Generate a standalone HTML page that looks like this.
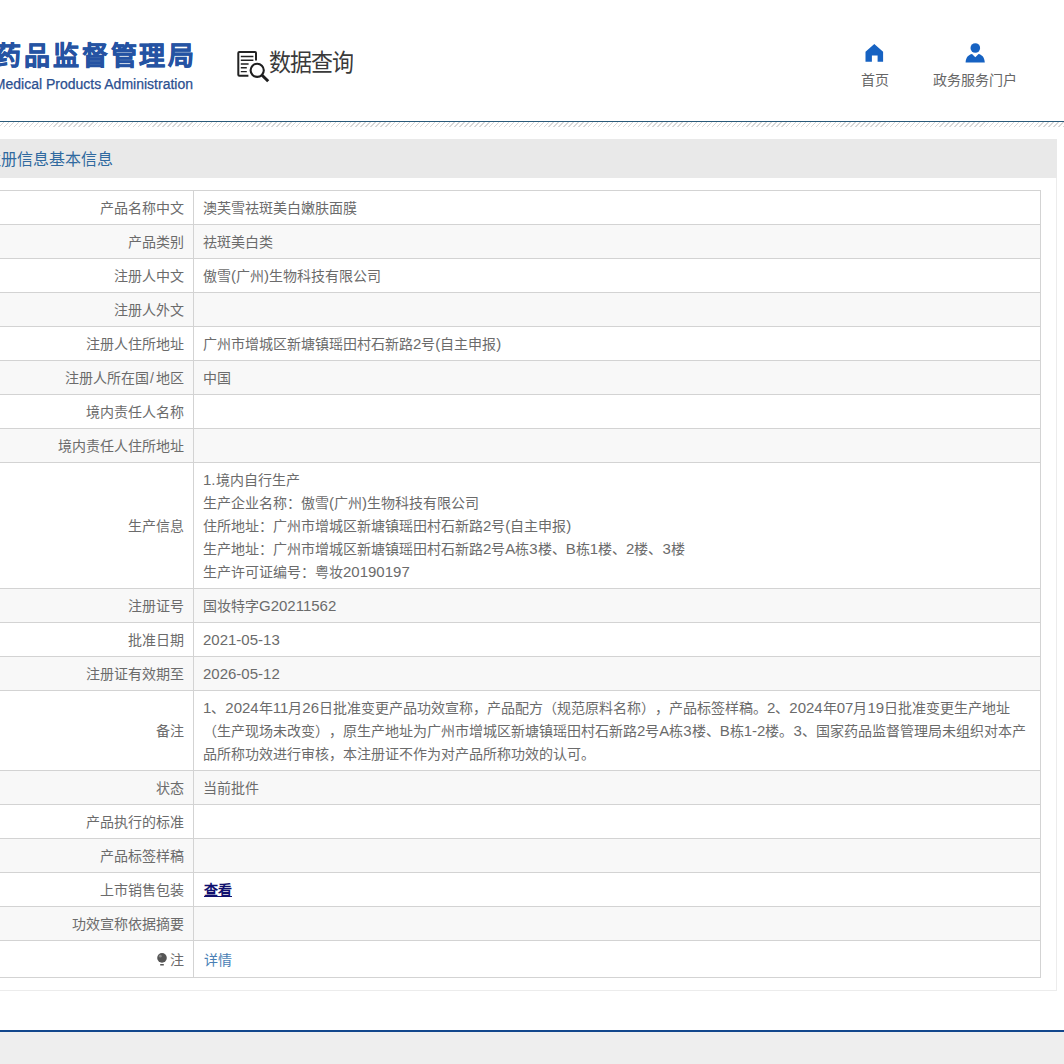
<!DOCTYPE html>
<html lang="zh-CN">
<head>
<meta charset="utf-8">
<style>
*{margin:0;padding:0;box-sizing:border-box}
html,body{width:1064px;height:1064px;overflow:hidden;background:#fff}
body{font-family:"Liberation Sans",sans-serif;position:relative;color:#555;text-spacing-trim:space-all}
.abs{position:absolute;white-space:nowrap}
.logo-cn{right:867px;top:37px;font-size:26px;font-weight:bold;color:#2553a3;-webkit-text-stroke:0.6px #2553a3;line-height:38px;letter-spacing:2.8px}
.logo-en{right:871px;top:75px;font-size:14px;color:#2b4f90;line-height:18px;-webkit-text-stroke:0.25px #2b4f90}
.dq{left:269px;top:46px;font-size:22px;color:#3a3a3a;line-height:32px;letter-spacing:-1px;transform:scaleY(1.1);transform-origin:0 0}
.nav{font-size:14px;color:#666;line-height:18px}
.hline{left:0;top:121px;width:1064px;height:1px;background:#2a5a7a}
.hatch{left:0;top:122px;width:1064px;height:5px;background:repeating-linear-gradient(135deg,#fff 0,#fff 2.5px,#d8d8d8 2.5px,#d8d8d8 3.5px)}
.box{left:-20px;top:139px;width:1077px;height:852px;border:1px solid #ececec;border-top:none}
.titlebar{left:0;top:139px;width:1057px;height:39px;background:#e9e9e9}
.title{left:-15px;top:149px;font-size:16px;color:#30699f;line-height:22px}
table{position:absolute;left:-20px;top:190px;width:1061px;border-collapse:collapse;font-size:14px;color:#6b6b6b}
td{border:1px solid #d3d3d3;padding:6px 9px 4px;line-height:23px;vertical-align:middle}
td.l{width:213px;text-align:right;color:#6b6b6b;padding-right:9.5px}
tr:nth-child(even) td{background:#f8f8f8}
.foot{left:0;top:1030px;width:1064px;height:2px;background:#12478c}
.footbg{left:0;top:1032px;width:1064px;height:32px;background:#eeeeee}
.n{font-size:15px;line-height:0}
a.v{color:#10106e;text-decoration:underline;font-weight:bold;margin-left:1px}
a.d{color:#4a7fb5;text-decoration:none;margin-left:0.5px}
</style>
</head>
<body>
<div class="abs logo-cn">国家药品监督管理局</div>
<div class="abs logo-en">National Medical Products Administration</div>
<svg class="abs" style="left:232px;top:46px" width="40" height="40" viewBox="0 0 40 40">
  <path d="M24 14.5 V7.1 Q24 6.1 23 6.1 H7.3 Q6.3 6.1 6.3 7.1 V28.8 Q6.3 29.8 7.3 29.8 H16.4" fill="none" stroke="#222" stroke-width="2"/>
  <path d="M8.8 10.5 H21.4 M8.8 14.3 H21.4 M8.8 18 H16.6 M8.8 21.7 H14.8 M8.8 25.6 H14.8" stroke="#222" stroke-width="1.4"/>
  <circle cx="25.2" cy="24.3" r="6.6" fill="none" stroke="#1e1e1e" stroke-width="2.1"/>
  <path d="M29.6 28.7 L36.2 35.2" stroke="#1e1e1e" stroke-width="3"/>
</svg>
<div class="abs dq">数据查询</div>
<svg class="abs" style="left:865px;top:44px" width="19" height="19" viewBox="0 0 19 19">
  <path d="M9.3 0 L18.1 7.8 V17.8 H12.6 V11.6 H6.9 V17.8 H0.5 V7.8 Z" fill="#1662c2"/>
</svg>
<div class="abs nav" style="left:861px;top:71px">首页</div>
<svg class="abs" style="left:965px;top:42px" width="21" height="21" viewBox="0 0 21 21">
  <circle cx="10.3" cy="6" r="4.8" fill="#1662c2"/>
  <path d="M0.6 20.6 C0.8 15.5 3.5 12.6 7 12 L10.3 15.2 L13.6 12 C17 12.6 19.6 15.5 19.8 20.6 Z" fill="#1662c2"/>
</svg>
<div class="abs nav" style="left:933px;top:71px">政务服务门户</div>
<div class="abs hline"></div>
<div class="abs hatch"></div>
<div class="abs box"></div>
<div class="abs titlebar"></div>
<div class="abs title">注册信息基本信息</div>
<table>
<tr><td class="l">产品名称中文</td><td>澳芙雪祛斑美白嫩肤面膜</td></tr>
<tr><td class="l">产品类别</td><td>祛斑美白类</td></tr>
<tr><td class="l">注册人中文</td><td>傲雪<span class="n">(</span>广州<span class="n">)</span>生物科技有限公司</td></tr>
<tr><td class="l">注册人外文</td><td></td></tr>
<tr><td class="l">注册人住所地址</td><td>广州市增城区新塘镇瑶田村石新路<span class="n">2</span>号<span class="n">(</span>自主申报<span class="n">)</span></td></tr>
<tr><td class="l">注册人所在国<span style="padding:0 1.5px">/</span>地区</td><td>中国</td></tr>
<tr><td class="l">境内责任人名称</td><td></td></tr>
<tr><td class="l">境内责任人住所地址</td><td></td></tr>
<tr><td class="l">生产信息</td><td><span class="n">1.</span>境内自行生产<br>生产企业名称：傲雪<span class="n">(</span>广州<span class="n">)</span>生物科技有限公司<br>住所地址：广州市增城区新塘镇瑶田村石新路<span class="n">2</span>号<span class="n">(</span>自主申报<span class="n">)</span><br>生产地址：广州市增城区新塘镇瑶田村石新路<span class="n">2</span>号<span class="n">A</span>栋<span class="n">3</span>楼、<span class="n">B</span>栋<span class="n">1</span>楼、<span class="n">2</span>楼、<span class="n">3</span>楼<br>生产许可证编号：粤妆<span class="n">20190197</span></td></tr>
<tr><td class="l">注册证号</td><td>国妆特字<span class="n">G20211562</span></td></tr>
<tr><td class="l">批准日期</td><td><span class="n">2021-05-13</span></td></tr>
<tr><td class="l">注册证有效期至</td><td><span class="n">2026-05-12</span></td></tr>
<tr><td class="l">备注</td><td style="white-space:nowrap"><span class="n">1</span>、<span class="n">2024</span>年<span class="n">11</span>月<span class="n">26</span>日批准变更产品功效宣称，产品配方（规范原料名称），产品标签样稿。<span class="n">2</span>、<span class="n">2024</span>年<span class="n">07</span>月<span class="n">19</span>日批准变更生产地址<br>（生产现场未改变），原生产地址为广州市增城区新塘镇瑶田村石新路<span class="n">2</span>号<span class="n">A</span>栋<span class="n">3</span>楼、<span class="n">B</span>栋<span class="n">1-2</span>楼。<span class="n">3</span>、国家药品监督管理局未组织对本产<br>品所称功效进行审核，本注册证不作为对产品所称功效的认可。</td></tr>
<tr><td class="l">状态</td><td>当前批件</td></tr>
<tr><td class="l">产品执行的标准</td><td></td></tr>
<tr><td class="l">产品标签样稿</td><td></td></tr>
<tr><td class="l">上市销售包装</td><td><a class="v">查看</a></td></tr>
<tr><td class="l">功效宣称依据摘要</td><td></td></tr>
<tr><td class="l" style="height:37px;padding-top:7px;padding-bottom:5px"><svg width="10" height="13" viewBox="0 0 10 13" style="vertical-align:-1px;margin-right:3px"><circle cx="5" cy="4.9" r="4.8" fill="#555"/><circle cx="3.3" cy="3.2" r="1.4" fill="#fff" opacity=".3"/><rect x="3.2" y="11" width="3.6" height="1.5" fill="#555"/></svg>注</td><td style="padding-top:7px;padding-bottom:5px"><a class="d">详情</a></td></tr>
</table>
<div class="abs foot"></div>
<div class="abs footbg"></div>
</body>
</html>
